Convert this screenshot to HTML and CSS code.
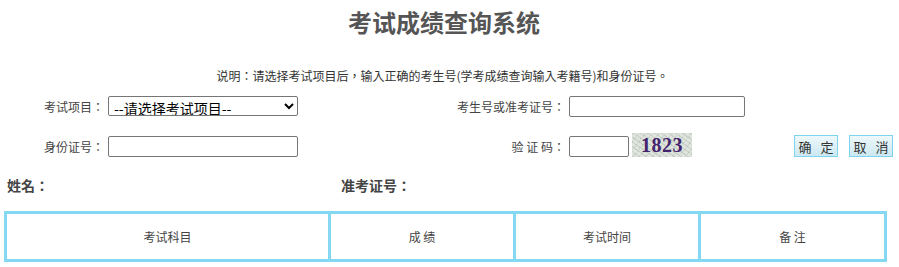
FILE: index.html
```html
<!DOCTYPE html>
<html lang="zh-CN">
<head>
<meta charset="utf-8">
<title>考试成绩查询系统</title>
<link rel="stylesheet" href="styles.css">
</head>
<body>
<h1 class="title">考试成绩查询系统</h1>
<p class="note">说明：请选择考试项目后，输入正确的考生号(学考成绩查询输入考籍号)和身份证号。</p>
<div class="form">
  <label class="lbl">考试项目：</label>
  <div class="field">
    <select class="sel"><option>--请选择考试项目--</option></select>
  </div>
  <label class="lbl">考生号或准考证号：</label>
  <div class="field"><input class="txt txt-id" type="text"></div>

  <label class="lbl">身份证号：</label>
  <div class="field"><input class="txt txt-card" type="text"></div>
  <label class="lbl">验 证 码：</label>
  <div class="field">
    <input class="txt txt-code" type="text">
    <div class="captcha"><span>1823</span></div>
    <div class="btns">
      <button class="btn" type="button">确 定</button>
      <button class="btn" type="button">取 消</button>
    </div>
  </div>
</div>
<div class="info">
  <div class="info-name">姓名：</div>
  <div class="info-no">准考证号：</div>
</div>
<div class="results">
  <div class="cell">考试科目</div>
  <div class="cell">成 绩</div>
  <div class="cell">考试时间</div>
  <div class="cell">备 注</div>
</div>
</body>
</html>
```
FILE: styles.css
```css
* { box-sizing: border-box; }
body {
  margin: 0;
  font-family: "Noto Sans CJK TC", "Noto Sans CJK SC", "Noto Sans", sans-serif;
  font-feature-settings: "locl" 0;
  color: #333;
  background: #fff;
}
.title {
  margin: 0;
  padding-right: 11px;
  font-family: "Noto Sans CJK SC", "Noto Sans", sans-serif;
  font-size: 24px;
  line-height: 43px;
  font-weight: bold;
  text-align: center;
  color: #555;
}
.note {
  margin: 23px 0 0;
  font-size: 12px;
  line-height: 20px;
  text-align: center;
  color: #333;
  padding-right: 14px;
}
.form {
  display: grid;
  grid-template-columns: 104px 338px 115px 1fr;
  grid-auto-rows: 40px;
  column-gap: 4px;
  align-items: center;
}
.lbl {
  text-align: right;
  font-size: 12px;
  color: #444;
  white-space: nowrap;
}
.field {
  display: flex;
  align-items: center;
}
.sel {
  width: 190px;
  height: 20px;
  font-family: "Noto Sans CJK SC", sans-serif;
  font-size: 14px;
  color: #000;
  border: 1px solid #767676;
  border-radius: 2px;
  background: #fff;
  padding: 0 0 0 1px;
}
.txt {
  height: 21px;
  border: 1px solid #767676;
  border-radius: 2px;
  background: #fff;
}
.txt-id { width: 176px; }
.txt-card { width: 190px; }
.txt-code { width: 60px; }
.captcha {
  margin-left: 3px;
  width: 60px;
  height: 24px;
  display: flex;
  align-items: center;
  justify-content: center;
  background-color: #dfe5dc;
  background-image:
    repeating-linear-gradient(35deg, rgba(150,170,150,0.35) 0 1px, transparent 1px 4px),
    repeating-linear-gradient(-50deg, rgba(170,180,190,0.3) 0 1px, transparent 1px 5px);
  margin-top: -3px;
}
.captcha span {
  font-family: "Liberation Serif", serif;
  font-weight: bold;
  font-size: 20px;
  line-height: 1;
  color: #44246f;
  letter-spacing: 0.5px;
}
.btns {
  margin-left: auto;
  margin-right: 6px;
  display: flex;
  gap: 11px;
}
.btn {
  width: 44px;
  height: 22px;
  padding: 0 0 0 3px;
  font-family: "Noto Sans CJK SC", sans-serif;
  font-size: 13px;
  color: #333;
  letter-spacing: 3px;
  border: 1px solid #7ed3ef;
  background: linear-gradient(#eef8fb, #cce8f1);
}
.info {
  display: flex;
  margin-top: 4px;
  height: 30px;
  align-items: center;
  font-size: 14px;
  font-weight: bold;
  color: #444;
}
.info-name { width: 341px; padding-left: 7px; }
.results {
  margin: 11px 0 0 4px;
  width: 883px;
  height: 51px;
  border: 3px solid #84d8f2;
  display: grid;
  grid-template-columns: 321px 185px 185px 186px;
}
.cell {
  display: flex;
  align-items: center;
  justify-content: center;
  font-size: 12px;
  color: #444;
}
.cell + .cell { border-left: 3px solid #84d8f2; }
```
